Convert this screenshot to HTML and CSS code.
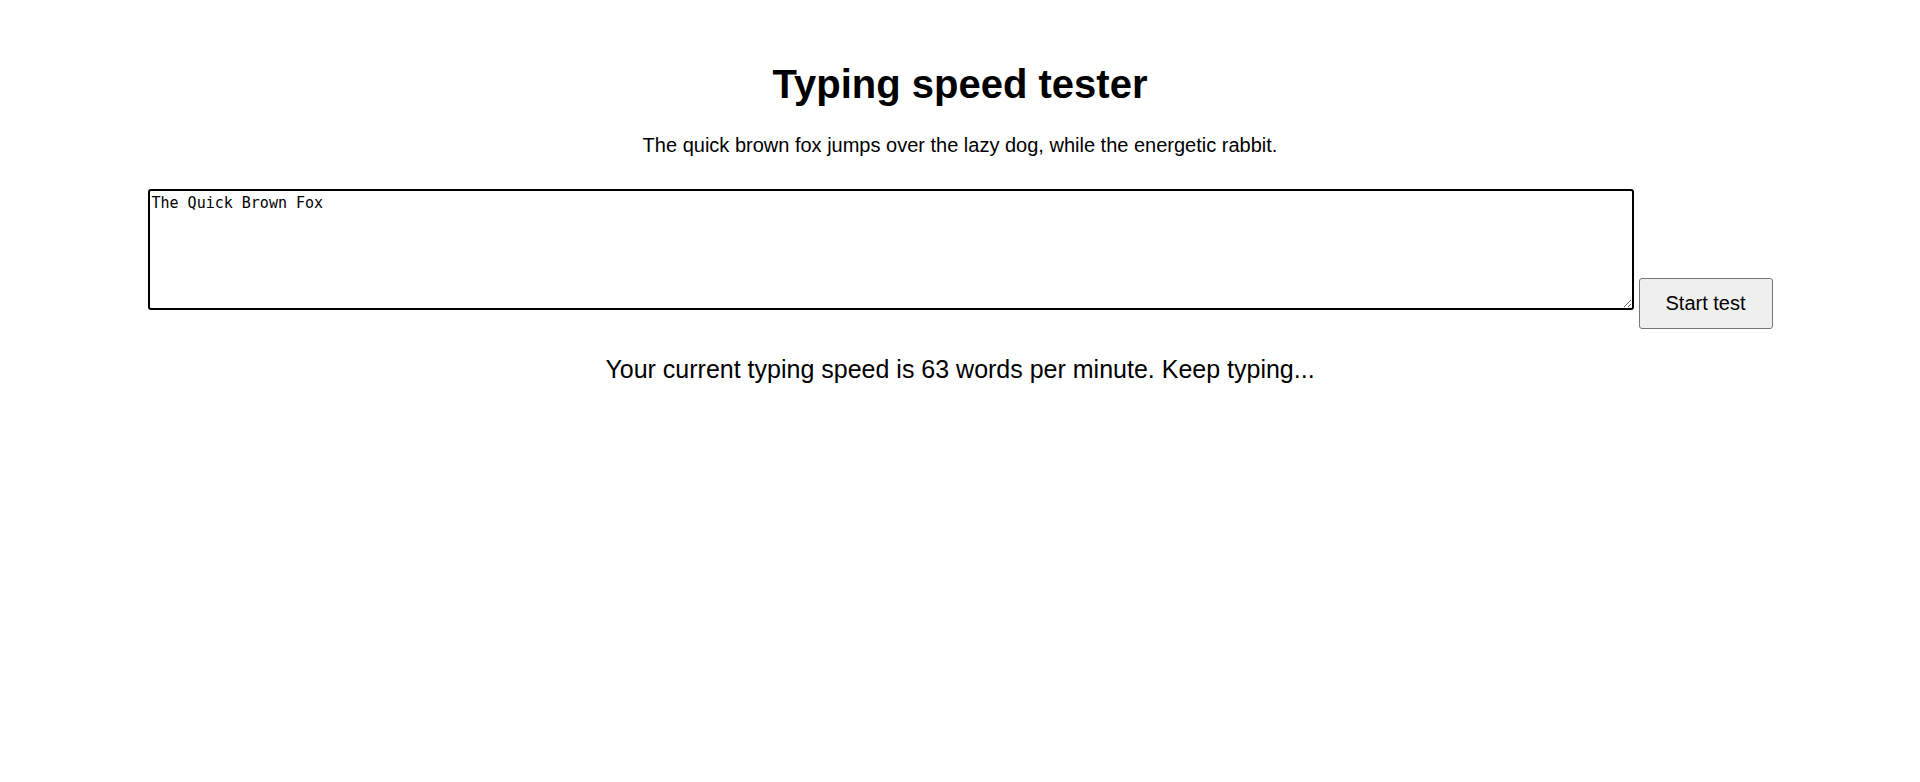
FILE: index.html
```html
<!DOCTYPE html>
<html lang="en">
<head>
<meta charset="utf-8">
<title>Typing speed tester</title>
<link rel="stylesheet" href="styles.css">
</head>
<body>
<main class="page">
  <h1 class="title">Typing speed tester</h1>
  <p class="sample">The quick brown fox jumps over the lazy dog, while the energetic rabbit.</p>
  <div class="row">
    <textarea class="input">The Quick Brown Fox</textarea>
    <button class="start" type="button">Start test</button>
  </div>
  <p class="status">Your current typing speed is 63 words per minute. Keep typing...</p>
</main>
</body>
</html>
```
FILE: styles.css
```css
html, body {
  margin: 0;
  padding: 0;
  background: #fff;
}
body {
  font-family: "Liberation Sans", Arial, sans-serif;
  color: #000;
}
.page {
  padding-top: 61px;
  text-align: center;
}
.title {
  margin: 0;
  font-size: 40px;
  line-height: 46px;
  font-weight: bold;
}
.sample {
  margin: 27px 0 0;
  font-size: 20px;
  line-height: 23px;
}
.row {
  display: flex;
  justify-content: center;
  align-items: flex-start;
  gap: 5px;
  margin-top: 32px;
}
.input {
  box-sizing: border-box;
  width: 1486px;
  height: 121px;
  margin: 0;
  padding: 4px 2px 2px 2px;
  border: 2px solid #000;
  border-radius: 3px;
  font-family: "DejaVu Sans Mono", monospace;
  font-size: 15px;
  line-height: 17px;
  color: #000;
  background: #fff;
  outline: none;
}
.start {
  box-sizing: border-box;
  width: 134px;
  height: 51px;
  margin-top: 89px;
  padding: 0;
  border: 1px solid #767676;
  border-radius: 3px;
  background: #efefef;
  font-family: "Liberation Sans", Arial, sans-serif;
  font-size: 20px;
  color: #000;
}
.status {
  margin: 26px 0 0;
  font-size: 25px;
  line-height: 29px;
}
```
